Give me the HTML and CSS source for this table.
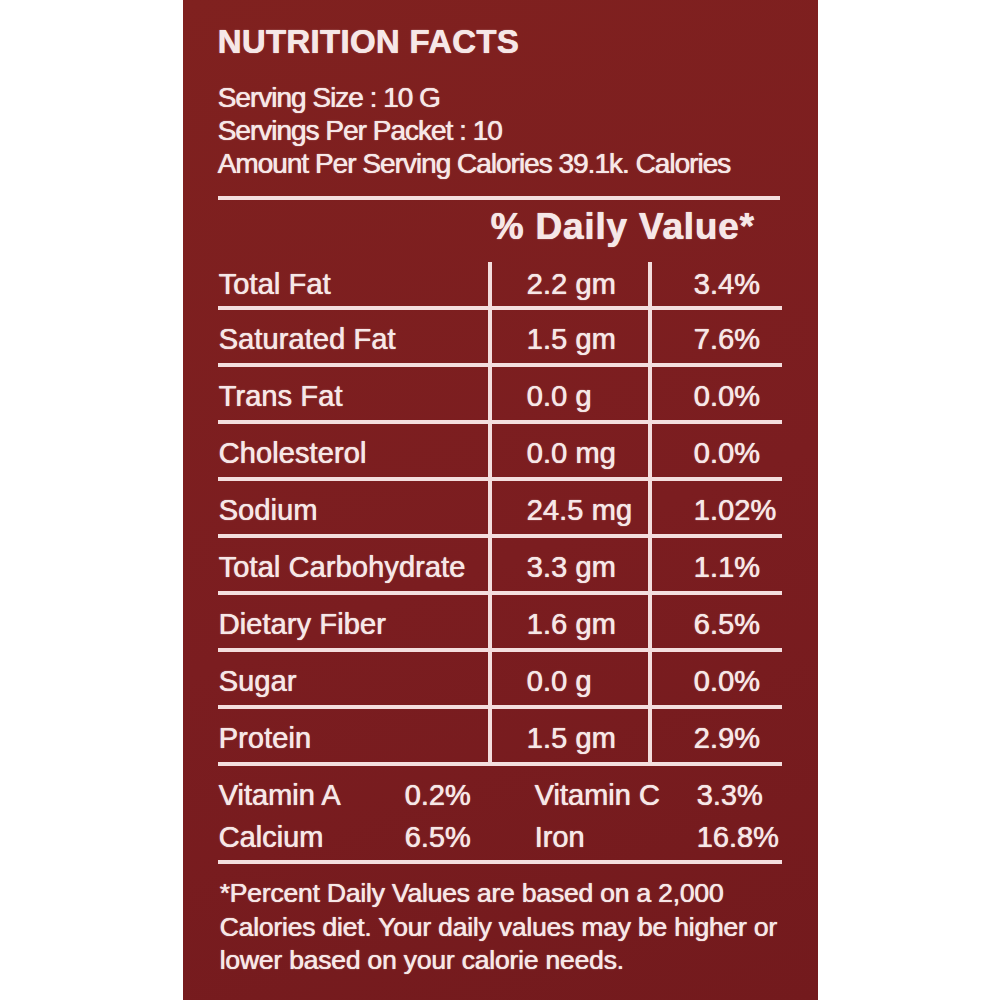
FILE: index.html
```html
<!DOCTYPE html>
<html lang="en">
<head>
<meta charset="utf-8">
<title>Nutrition Facts</title>
<link rel="stylesheet" href="styles.css">
</head>
<body>
<div class="panel">
  <h1 class="title">NUTRITION FACTS</h1>
  <div class="info">
    <div>Serving Size : 10 G</div>
    <div>Servings Per Packet : 10</div>
    <div>Amount Per Serving Calories 39.1k. Calories</div>
  </div>
  <div class="rule"></div>
  <div class="dv-head">% Daily Value*</div>
  <div class="facts">
    <div class="cell name first">Total Fat</div><div class="cell amt first">2.2 gm</div><div class="cell pct first">3.4%</div>
    <div class="cell name">Saturated Fat</div><div class="cell amt">1.5 gm</div><div class="cell pct">7.6%</div>
    <div class="cell name">Trans Fat</div><div class="cell amt">0.0 g</div><div class="cell pct">0.0%</div>
    <div class="cell name">Cholesterol</div><div class="cell amt">0.0 mg</div><div class="cell pct">0.0%</div>
    <div class="cell name">Sodium</div><div class="cell amt">24.5 mg</div><div class="cell pct">1.02%</div>
    <div class="cell name">Total Carbohydrate</div><div class="cell amt">3.3 gm</div><div class="cell pct">1.1%</div>
    <div class="cell name">Dietary Fiber</div><div class="cell amt">1.6 gm</div><div class="cell pct">6.5%</div>
    <div class="cell name">Sugar</div><div class="cell amt">0.0 g</div><div class="cell pct">0.0%</div>
    <div class="cell name">Protein</div><div class="cell amt">1.5 gm</div><div class="cell pct">2.9%</div>
  </div>
  <div class="vitamins">
    <div>Vitamin A</div><div>0.2%</div><div>Vitamin C</div><div>3.3%</div>
    <div>Calcium</div><div>6.5%</div><div>Iron</div><div>16.8%</div>
  </div>
  <div class="rule rule-bottom"></div>
  <p class="note">*Percent Daily Values are based on a 2,000<br>Calories diet. Your daily values may be higher or<br>lower based on your calorie needs.</p>
</div>
</body>
</html>
```

FILE: styles.css
```css
html, body {
  margin: 0;
  padding: 0;
  background: #ffffff;
}

.panel {
  width: 635px;
  height: 1000px;
  margin: 0 auto;
  box-sizing: border-box;
  padding: 24px 0 0 35px;
  background: linear-gradient(160deg, #80211f 0%, #7b1d20 55%, #731a1d 100%);
  color: #f6e7e7;
  font-family: "Liberation Sans", Arial, sans-serif;
  overflow: hidden;
  text-shadow: 0.4px 0 0 #f6e7e7, 0 0 1.5px rgba(255, 235, 235, 0.55);
}

.title {
  margin: 0;
  font-size: 33px;
  line-height: 36px;
  font-weight: bold;
  letter-spacing: 0.3px;
}

.info {
  margin-top: 21px;
  font-size: 28px;
  line-height: 33px;
  letter-spacing: -1px;
}

.rule {
  margin-top: 16px;
  width: 562px;
  height: 4px;
  background: #f4dede;
}

.dv-head {
  margin-top: 6px;
  padding-left: 273px;
  font-size: 37px;
  line-height: 41px;
  font-weight: bold;
  letter-spacing: 0.8px;
}

.facts {
  margin-top: 15px;
  display: grid;
  grid-template-columns: 270px 160px 134px;
  width: 564px;
  font-size: 29px;
  letter-spacing: 0.1px;
}

.cell {
  border-bottom: 4px solid #f4dede;
  padding-top: 6px;
  line-height: 47px;
  white-space: nowrap;
}

.cell.first {
  padding-top: 0;
  line-height: 44px;
}

.name {
  padding-left: 1px;
}

.amt {
  border-left: 4px solid #f4dede;
  padding-left: 35px;
}

.pct {
  border-left: 4px solid #f4dede;
  padding-left: 42px;
}

.vitamins {
  margin-top: 8px;
  display: grid;
  grid-template-columns: 186px 130px 162px auto;
  padding-left: 1px;
  font-size: 29px;
  line-height: 42px;
  letter-spacing: 0;
}

.rule-bottom {
  margin-top: 2px;
  width: 564px;
}

.note {
  margin: 13px 0 0 2px;
  font-size: 26.5px;
  line-height: 33.5px;
  letter-spacing: -0.2px;
  white-space: nowrap;
}
```
